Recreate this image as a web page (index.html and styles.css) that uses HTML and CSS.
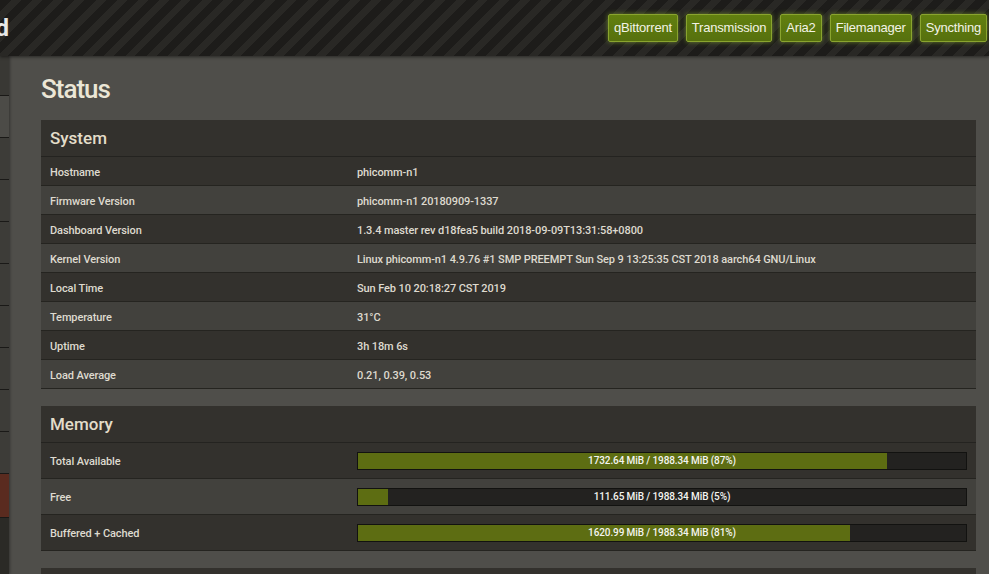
FILE: index.html
```html
<!DOCTYPE html>
<html lang="en">
<head>
    <meta charset="UTF-8">
    <meta name="viewport" content="width=device-width, initial-scale=1.0">
    <title>Status</title>
    <link rel="stylesheet" href="styles.css">
</head>
<body>
    <header class="topbar">
        <div class="brand"><span>d</span></div>
        <nav class="apps">
            <a class="app-button" href="#">qBittorrent</a>
            <a class="app-button" href="#">Transmission</a>
            <a class="app-button" href="#">Aria2</a>
            <a class="app-button" href="#">Filemanager</a>
            <a class="app-button" href="#">Syncthing</a>
        </nav>
    </header>

    <div class="layout">
        <aside class="sidebar">
            <div class="side-item first"></div>
            <div class="side-item light"></div>
            <div class="side-item"></div>
            <div class="side-item"></div>
            <div class="side-item"></div>
            <div class="side-item"></div>
            <div class="side-item"></div>
            <div class="side-item"></div>
            <div class="side-item"></div>
            <div class="side-item"></div>
            <div class="side-item active"></div>
            <div class="side-rest"></div>
        </aside>

        <main class="content">
            <h1>Status</h1>

            <section class="panel">
                <h2>System</h2>
                <table class="info-table">
                    <tr><td>Hostname</td><td>phicomm-n1</td></tr>
                    <tr><td>Firmware Version</td><td>phicomm-n1 20180909-1337</td></tr>
                    <tr><td>Dashboard Version</td><td>1.3.4 master rev d18fea5 build 2018-09-09T13:31:58+0800</td></tr>
                    <tr><td>Kernel Version</td><td>Linux phicomm-n1 4.9.76 #1 SMP PREEMPT Sun Sep 9 13:25:35 CST 2018 aarch64 GNU/Linux</td></tr>
                    <tr><td>Local Time</td><td>Sun Feb 10 20:18:27 CST 2019</td></tr>
                    <tr><td>Temperature</td><td>31°C</td></tr>
                    <tr><td>Uptime</td><td>3h 18m 6s</td></tr>
                    <tr><td>Load Average</td><td>0.21, 0.39, 0.53</td></tr>
                </table>
            </section>

            <section class="panel">
                <h2>Memory</h2>
                <table class="info-table bars">
                    <tr>
                        <td>Total Available</td>
                        <td><div class="bar"><div class="bar-fill" style="width: 87%"></div><span>1732.64 MiB / 1988.34 MiB (87%)</span></div></td>
                    </tr>
                    <tr>
                        <td>Free</td>
                        <td><div class="bar"><div class="bar-fill" style="width: 5%"></div><span>111.65 MiB / 1988.34 MiB (5%)</span></div></td>
                    </tr>
                    <tr>
                        <td>Buffered + Cached</td>
                        <td><div class="bar"><div class="bar-fill" style="width: 81%"></div><span>1620.99 MiB / 1988.34 MiB (81%)</span></div></td>
                    </tr>
                </table>
            </section>

            <section class="panel">
                <div class="panel-head"></div>
            </section>
        </main>
    </div>
</body>
</html>
```

FILE: styles.css
```css
body {
    margin: 0;
    padding: 0;
    font-family: Roboto, "Liberation Sans", sans-serif;
    background-color: #4f4e4a;
    color: #dedacf;
    height: 100vh;
    overflow: hidden;
}
.topbar {
    height: 56px;
    display: flex;
    align-items: center;
    justify-content: space-between;
    background: repeating-linear-gradient(135deg, #1d1c1a 0, #1d1c1a 8px, #292825 8px, #292825 15px);
    box-shadow: 0 1px 3px rgba(0, 0, 0, 0.5);
    position: relative;
    z-index: 2;
}
.brand {
    width: 9px;
    overflow: hidden;
    display: flex;
    justify-content: flex-end;
}
.brand span {
    white-space: nowrap;
    font-size: 24px;
    font-weight: 700;
    color: #e8e8e8;
}
.apps {
    display: flex;
    gap: 8px;
    padding-right: 2px;
}
.app-button {
    height: 26px;
    line-height: 26px;
    padding: 0 5px;
    font-family: "Liberation Sans", Arial, sans-serif;
    font-size: 13px;
    letter-spacing: -0.2px;
    color: #f3f3e6;
    text-decoration: none;
    background: linear-gradient(#62800f, #56700e);
    border: 1px solid #8aa42f;
    border-radius: 2px;
    box-shadow: 0 0 5px rgba(150, 190, 50, 0.6);
}
.layout {
    display: flex;
    height: calc(100vh - 56px);
}
.sidebar {
    width: 9px;
    flex-shrink: 0;
    display: flex;
    flex-direction: column;
    box-shadow: 1px 0 3px rgba(0, 0, 0, 0.35);
}
.side-item {
    height: 41px;
    flex-shrink: 0;
    border-bottom: 1px solid #1a1917;
    background-color: #3d3c38;
}
.side-item.first {
    height: 39px;
    background-color: #393834;
}
.side-item.light {
    background-color: #4c4b47;
}
.side-item.active {
    height: 43px;
    background-color: #5a2b1f;
}
.side-rest {
    flex: 1;
    background-color: #2b2a26;
}
.content {
    flex: 1;
    padding: 16px 13px 0 32px;
}
h1 {
    margin: 0 0 14px;
    font-size: 26px;
    line-height: 34px;
    font-weight: 500;
    letter-spacing: -1px;
    color: #ebe6d6;
}
.panel {
    background-color: #33312d;
    margin-bottom: 17px;
}
.panel h2 {
    margin: 0;
    height: 36px;
    line-height: 36px;
    padding: 0 9px;
    font-size: 17px;
    font-weight: 500;
    color: #e3ddc9;
    border-bottom: 1px solid #242320;
}
.panel-head {
    height: 36px;
}
.info-table {
    width: 100%;
    border-collapse: collapse;
    table-layout: fixed;
    font-size: 11px;
    font-weight: 500;
    letter-spacing: -0.1px;
}
.info-table td {
    height: 26px;
    padding: 2px 9px 0 0;
    border-bottom: 1px solid #252420;
    white-space: nowrap;
}
.info-table td:first-child {
    width: 298px;
    padding: 2px 9px 0;
}
.info-table tr:nth-child(even) {
    background-color: #42413d;
}
.bars td {
    height: 33px;
}
.bars td:last-child {
    height: 35px;
    padding-top: 0;
}
.bar {
    position: relative;
    height: 16px;
    border: 1px solid #121210;
    background-color: #232220;
}
.bar-fill {
    height: 100%;
    background-color: #5d6d12;
}
.bar span {
    position: absolute;
    top: 0;
    left: 0;
    right: 0;
    text-align: center;
    line-height: 16px;
    font-size: 10px;
    color: #f4f4f0;
}
```
